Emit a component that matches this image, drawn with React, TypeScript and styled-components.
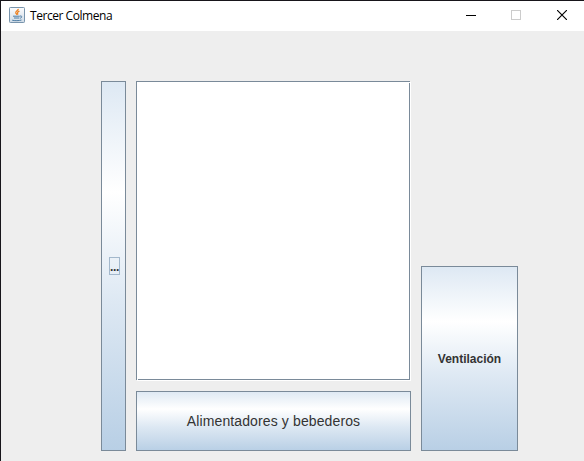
import React from "react";
import styled, { createGlobalStyle } from "styled-components";

const GlobalStyle = createGlobalStyle`
  html, body { margin: 0; padding: 0; overflow: hidden; }
  * { box-sizing: border-box; }
`;

const Window = styled.main`
  display: flex;
  flex-direction: column;
  width: 584px;
  height: 461px;
  border-top: 1px solid #17151a;
  border-left: 1px solid #17151a;
  background: #eeeeee;
  font-family: "Liberation Sans", Arial, sans-serif;
`;

const TitleBar = styled.header`
  display: flex;
  align-items: center;
  flex: 0 0 30px;
  padding: 0 0 2px 8px;
  background: #ffffff;
`;

const Title = styled.h1`
  flex: 1;
  margin: 2px 0 0 5px;
  color: #000000;
  font: 400 12px/16px "Open Sans", "Noto Sans", sans-serif;
  letter-spacing: -0.45px;
  white-space: nowrap;
`;

const Controls = styled.div`
  display: flex;
  height: 28px;
`;

const ControlButton = styled.button<{ $inset?: number }>`
  display: flex;
  align-items: center;
  justify-content: center;
  width: 46px;
  height: 28px;
  padding: 0 0 0 ${(p) => p.$inset ?? 2}px;
  border: 0;
  background: transparent;
`;

const Content = styled.section`
  display: grid;
  grid-template-columns: 25px 275px 97px;
  grid-template-rows: 300px 60px;
  gap: 10px;
  padding: 50px 0 0 100px;
`;

const MetalButton = styled.button<{ $size?: number; $bold?: boolean }>`
  display: flex;
  align-items: center;
  justify-content: center;
  padding: 0;
  border: 1px solid #7a8a99;
  border-radius: 0;
  background: linear-gradient(#dde8f3 0%, #ffffff 30%, #dde8f3 60%, #b8cfe5 100%);
  background-origin: border-box;
  color: #333333;
  font-family: inherit;
  font-size: ${(p) => p.$size ?? 12}px;
  font-weight: ${(p) => (p.$bold ? 700 : 400)};
  white-space: nowrap;
`;

const SideButton = styled(MetalButton)`
  grid-row: 1 / 3;
`;

const VentButton = styled(MetalButton)`
  grid-column: 3;
  grid-row: 1 / 3;
  align-self: end;
  height: 185px;
`;

const FocusFrame = styled.span`
  display: flex;
  align-items: center;
  justify-content: center;
  width: 11px;
  height: 18px;
  margin: 0 0 0 2px;
  padding-top: 1px;
  border: 1px solid #a3b8cc;
  font-size: 12px;
  letter-spacing: -0.3px;
  line-height: 16px;
`;

const Label = styled.span<{ $width: number; $tracking?: number }>`
  width: ${(p) => p.$width}px;
  letter-spacing: ${(p) => p.$tracking ?? 0}px;
  text-align: center;
`;

const ScrollFrame = styled.svg`
  display: block;
  grid-column: 2;
  grid-row: 1;
`;

const TextPane = styled.div`
  grid-column: 2;
  grid-row: 1;
  width: 273px;
  height: 298px;
  margin: 1px;
  background: #ffffff;
`;

const JavaIcon = () => (
  <svg width="16" height="16" viewBox="0 0 16 16" fill="none">
    <defs>
      <linearGradient id="tile" x1="0" y1="0" x2="0" y2="1">
        <stop offset="0" stopColor="#fcfcfd" />
        <stop offset="1" stopColor="#cfdbe6" />
      </linearGradient>
    </defs>
    <rect x=".5" y=".5" width="15" height="15" rx=".8" fill="url(#tile)" stroke="#7894ac" />
    <path d="M9.2 1.8c.5 1.8-3 2.3-2.4 4.1.3.7 1 1.1 1.1 1.9M10.4 4.1C8.9 4.8 8.1 5.4 8.6 6.3c.3.5.3.9-.1 1.4" stroke="#ed8020" strokeWidth="1.3" />
    <path d="M4 9.2h6.8M5 11h5.4M11 9c2.5-.5 2.2 1.9.1 2.2M3.2 13.2c1.9.7 7.5.6 9.3-.2" stroke="#4e7da4" strokeWidth="1" />
  </svg>
);

export default function App() {
  return (
    <>
      <GlobalStyle />
      <Window>
        <TitleBar>
          <JavaIcon />
          <Title>Tercer Colmena</Title>
          <Controls>
            <ControlButton aria-label="Minimizar" $inset={4}>
              <svg width="10" height="10" shapeRendering="crispEdges">
                <path d="M0 5.5h10" stroke="#000000" />
              </svg>
            </ControlButton>
            <ControlButton aria-label="Maximizar" disabled>
              <svg width="10" height="10" shapeRendering="crispEdges">
                <rect x=".5" y=".5" width="9" height="9" fill="none" stroke="#cccccc" />
              </svg>
            </ControlButton>
            <ControlButton aria-label="Cerrar">
              <svg width="10" height="10">
                <path d="M0 0l10 10M10 0L0 10" stroke="#000000" strokeWidth="1.15" />
              </svg>
            </ControlButton>
          </Controls>
        </TitleBar>
        <Content>
          <SideButton $bold>
            <FocusFrame>...</FocusFrame>
          </SideButton>
          <TextPane />
          <ScrollFrame width="275" height="300" shapeRendering="crispEdges">
            <path d="M0 .5h274M.5 0v299M273.5 2v297M2 298.5h272" stroke="#7a8a99" fill="none" />
            <path d="M274.5 1v299M1 299.5h274" stroke="#ffffff" fill="none" />
          </ScrollFrame>
          <MetalButton $size={14}>
            <Label $width={174} $tracking={0.12}>Alimentadores y bebederos</Label>
          </MetalButton>
          <VentButton $bold>
            <Label $width={65}>Ventilación</Label>
          </VentButton>
        </Content>
      </Window>
    </>
  );
}
